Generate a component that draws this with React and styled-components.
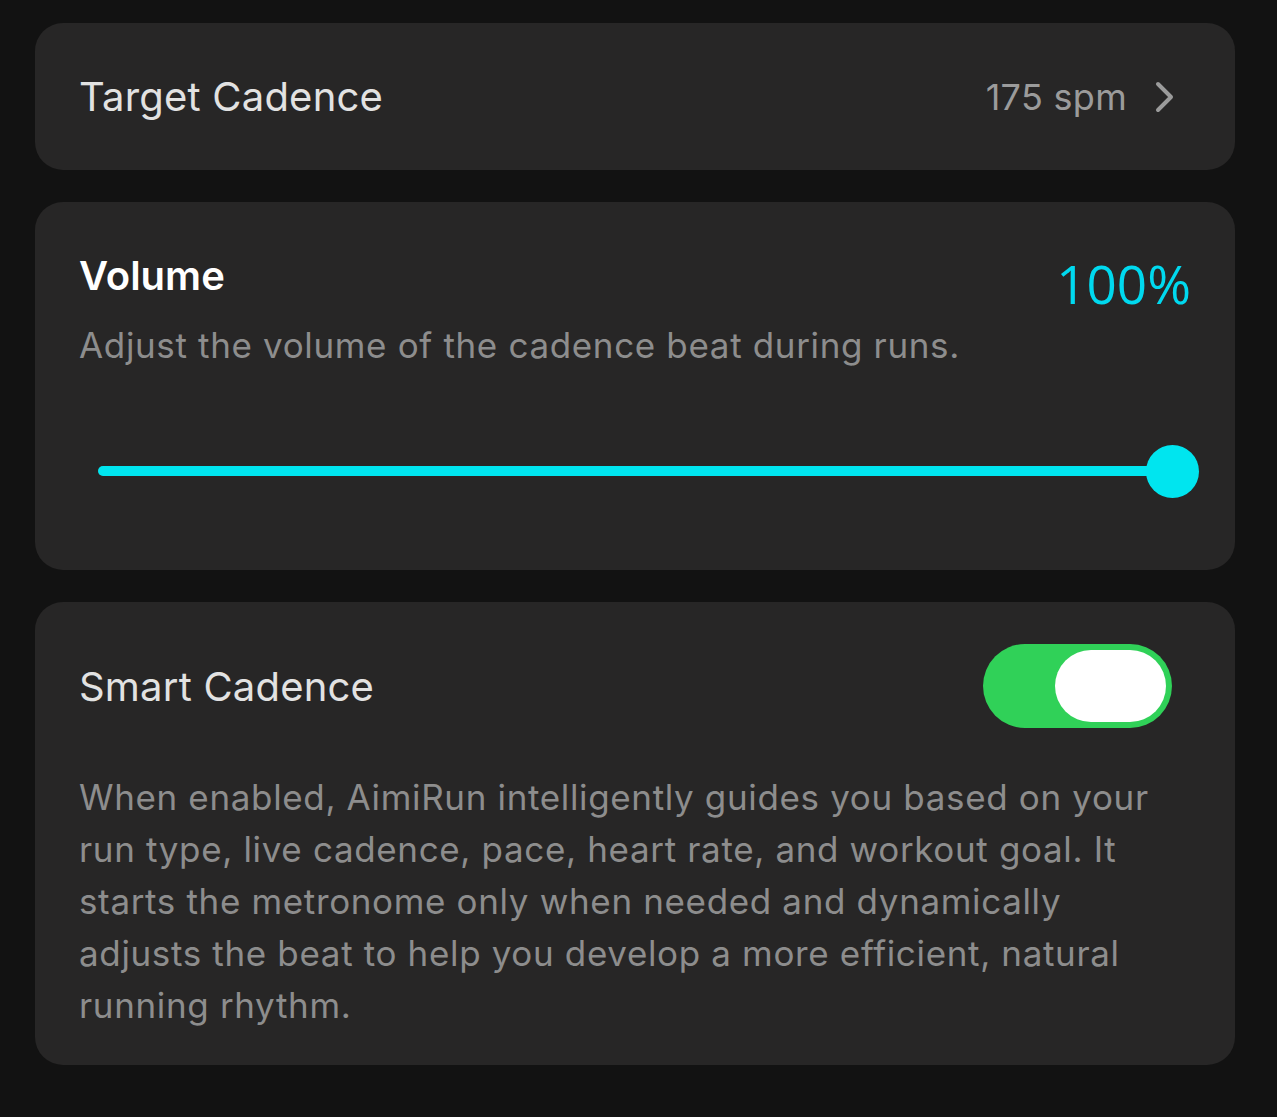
import React, { useState } from "react";
import styled, { createGlobalStyle } from "styled-components";

const GlobalStyle = createGlobalStyle`
  html, body {
    margin: 0;
    padding: 0;
    background: #121212;
  }
  body {
    font-family: Inter, "Noto Sans", sans-serif;
    -webkit-font-smoothing: antialiased;
  }
`;

const Page = styled.main`
  display: flex;
  flex-direction: column;
  gap: 32px;
  padding: 23px 42px 54px 35px;
  min-height: 100vh;
  box-sizing: border-box;
`;

const Card = styled.section`
  background: #272626;
  border-radius: 28px;
  padding: ${(p) => p.$pad || "0 44px"};
  box-sizing: border-box;
`;

const LinkRow = styled.div`
  display: flex;
  align-items: center;
  height: 147px;
  cursor: pointer;
`;

const Label = styled.div`
  flex: 1;
  font-size: 40px;
  color: #e2e2e2;
  letter-spacing: 0.2px;
`;

const Value = styled.span`
  font-size: 36px;
  color: #9b9b9b;
  letter-spacing: 0.3px;
`;

const Chevron = styled.svg`
  margin-left: 28px;
  margin-right: 16px;
  flex-shrink: 0;
`;

const HeaderRow = styled.div`
  display: flex;
  justify-content: space-between;
  align-items: flex-start;
`;

const Title = styled.h2`
  margin: 0;
  font-size: 40px;
  line-height: 48px;
  font-weight: 600;
  color: #ffffff;
`;

const Percent = styled.span`
  font-family: "Open Sans", sans-serif;
  font-size: 53px;
  line-height: 56px;
  color: #00d9ef;
  margin-top: 4px;
`;

const Description = styled.p`
  margin: 7px 0 0;
  font-size: 35px;
  line-height: 52px;
  color: #8d8d8d;
  letter-spacing: 0.65px;
`;

const SliderArea = styled.div`
  position: relative;
  height: 52px;
  margin: 74px -7px 0 -7px;
  cursor: pointer;
`;

const Track = styled.div`
  position: absolute;
  left: 26px;
  right: 26px;
  top: 21px;
  height: 10px;
  border-radius: 5px;
  background: #3a3a3c;
`;

const Fill = styled.div`
  height: 100%;
  border-radius: 5px;
  background: #00e5ef;
`;

const Thumb = styled.div`
  position: absolute;
  top: 0;
  width: 53px;
  height: 53px;
  margin-left: -26px;
  border-radius: 50%;
  background: #00e5ef;
`;

const ToggleRow = styled.div`
  display: flex;
  align-items: center;
  justify-content: space-between;
  padding-right: 19px;
`;

const Switch = styled.button`
  display: flex;
  justify-content: ${(p) => (p.$on ? "flex-end" : "flex-start")};
  width: 189px;
  height: 84px;
  padding: 6px;
  border: none;
  border-radius: 42px;
  background: ${(p) => (p.$on ? "#30d158" : "#3a3a3c")};
  box-sizing: border-box;
  cursor: pointer;
`;

const Knob = styled.span`
  width: 111px;
  height: 72px;
  border-radius: 36px;
  background: #ffffff;
`;

const Body = styled.p`
  margin: 43px 0 0;
  font-size: 35px;
  line-height: 52px;
  color: #8d8d8d;
  letter-spacing: 0.65px;
`;

export default function App() {
  const [volume] = useState(100);
  const [smart, setSmart] = useState(true);

  return (
    <>
      <GlobalStyle />
      <Page>
        <Card>
          <LinkRow>
            <Label>Target Cadence</Label>
            <Value>175 spm</Value>
            <Chevron width="20" height="32" viewBox="0 0 20 32">
              <path
                d="M3 3 L16 16 L3 29"
                fill="none"
                stroke="#9b9b9b"
                strokeWidth="4"
                strokeLinecap="round"
                strokeLinejoin="round"
              />
            </Chevron>
          </LinkRow>
        </Card>

        <Card $pad="50px 44px 73px">
          <HeaderRow>
            <Title>Volume</Title>
            <Percent>{volume}%</Percent>
          </HeaderRow>
          <Description>Adjust the volume of the cadence beat during runs.</Description>
          <SliderArea>
            <Track>
              <Fill style={{ width: `${volume}%` }} />
            </Track>
            <Thumb style={{ left: `calc(26px + (100% - 52px) * ${volume / 100})` }} />
          </SliderArea>
        </Card>

        <Card $pad="42px 44px 34px">
          <ToggleRow>
            <Label>Smart Cadence</Label>
            <Switch $on={smart} onClick={() => setSmart(!smart)}>
              <Knob />
            </Switch>
          </ToggleRow>
          <Body>
            When enabled, AimiRun intelligently guides you based on your run type, live
            cadence, pace, heart rate, and workout goal. It starts the metronome only when
            needed and dynamically adjusts the beat to help you develop a more efficient,
            natural running rhythm.
          </Body>
        </Card>
      </Page>
    </>
  );
}
